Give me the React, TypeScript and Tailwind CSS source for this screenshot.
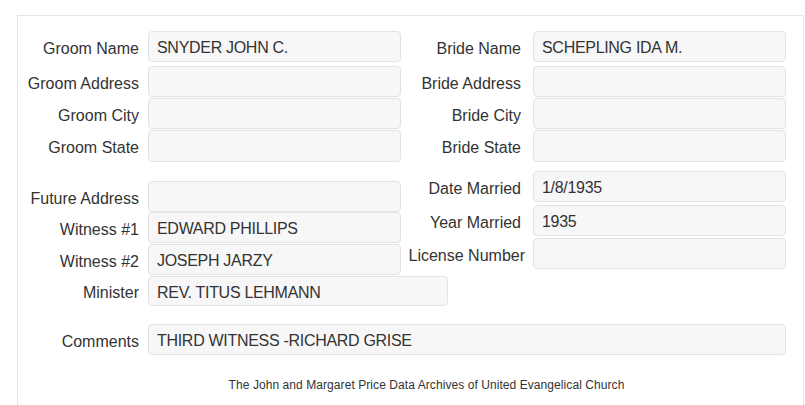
import React from 'react';

type Field = { label: string; value?: string; h: string; mt: string; wide?: boolean; pr?: string };

const groomTop: Field[] = [
  { label: 'Groom Name', value: 'SNYDER JOHN C.', h: 'h-[31px]', mt: 'mt-0' },
  { label: 'Groom Address', h: 'h-[31px]', mt: 'mt-[4px]' },
  { label: 'Groom City', h: 'h-[31px]', mt: 'mt-[1px]' },
  { label: 'Groom State', h: 'h-[32px]', mt: 'mt-[1px]' },
];

const brideTop: Field[] = [
  { label: 'Bride Name', value: 'SCHEPLING IDA M.', h: 'h-[31px]', mt: 'mt-0' },
  { label: 'Bride Address', h: 'h-[31px]', mt: 'mt-[4px]' },
  { label: 'Bride City', h: 'h-[31px]', mt: 'mt-[1px]' },
  { label: 'Bride State', h: 'h-[32px]', mt: 'mt-[1px]' },
];

const leftLower: Field[] = [
  { label: 'Future Address', h: 'h-[31px]', mt: 'mt-0' },
  { label: 'Witness #1', value: 'EDWARD PHILLIPS', h: 'h-[31px]', mt: 'mt-0' },
  { label: 'Witness #2', value: 'JOSEPH JARZY', h: 'h-[31px]', mt: 'mt-[1px]' },
  { label: 'Minister', value: 'REV. TITUS LEHMANN', h: 'h-[30px]', mt: 'mt-[1px]', wide: true },
];

const rightLower: Field[] = [
  { label: 'Date Married', value: '1/8/1935', h: 'h-[31px]', mt: 'mt-0' },
  { label: 'Year Married', value: '1935', h: 'h-[31px]', mt: 'mt-[3px]' },
  { label: 'License Number', h: 'h-[31px]', mt: 'mt-[2px]', pr: 'pr-[8px]' },
];

const Input: React.FC<{ value?: string; h: string; w: string }> = ({ value, h, w }) => (
  <div
    className={`${h} ${w} shrink-0 flex items-center pt-[3px] pl-[8px] rounded-[4px] border border-[#e3e3e3] bg-[#f7f7f7] text-[16px] tracking-[-0.3px] text-[#333] whitespace-nowrap`}
  >
    {value}
  </div>
);

const Row: React.FC<{ f: Field; labelW: string; pr: string }> = ({ f, labelW, pr }) => (
  <div className={`flex items-center ${f.mt}`}>
    <div className={`${labelW} ${f.pr ?? pr} shrink-0 pt-[4px] text-right text-[16px] text-[#333] whitespace-nowrap`}>
      {f.label}
    </div>
    <Input value={f.value} h={f.h} w={f.wide ? 'w-[300px]' : 'w-[253px]'} />
  </div>
);

const LeftCol: React.FC<{ fields: Field[]; className?: string }> = ({ fields, className }) => (
  <div className={`flex flex-col w-[383px] ${className ?? ''}`}>
    {fields.map((f) => (
      <Row key={f.label} f={f} labelW="w-[130px]" pr="pr-[9px]" />
    ))}
  </div>
);

const RightCol: React.FC<{ fields: Field[]; className?: string }> = ({ fields, className }) => (
  <div className={`flex flex-col ${className ?? ''}`}>
    {fields.map((f) => (
      <Row key={f.label} f={f} labelW="w-[132px]" pr="pr-[12px]" />
    ))}
  </div>
);

export default function App() {
  return (
    <div
      className="w-[805px] h-[405px] overflow-hidden bg-white pt-[15px] pl-[17px]"
      style={{ fontFamily: '"Liberation Sans", Arial, sans-serif' }}
    >
      <div className="w-[787px] h-[420px] border border-[#e6e6e6] pt-[15px]">
        <div className="flex">
          <LeftCol fields={groomTop} />
          <RightCol fields={brideTop} />
        </div>

        <div className="flex items-start">
          <LeftCol fields={leftLower} className="pt-[19px]" />
          <RightCol fields={rightLower} className="pt-[9px]" />
        </div>

        <div className="mt-[18px] flex items-center">
          <div className="w-[130px] pr-[9px] pt-[4px] text-right text-[16px] text-[#333]">Comments</div>
          <Input value="THIRD WITNESS -RICHARD GRISE" h="h-[31px]" w="w-[638px]" />
        </div>

        <div className="mt-[23px] pl-[32px] text-center text-[12px] leading-[14px] tracking-[0.07px] text-[#333]">
          The John and Margaret Price Data Archives of United Evangelical Church
        </div>
      </div>
    </div>
  );
}
